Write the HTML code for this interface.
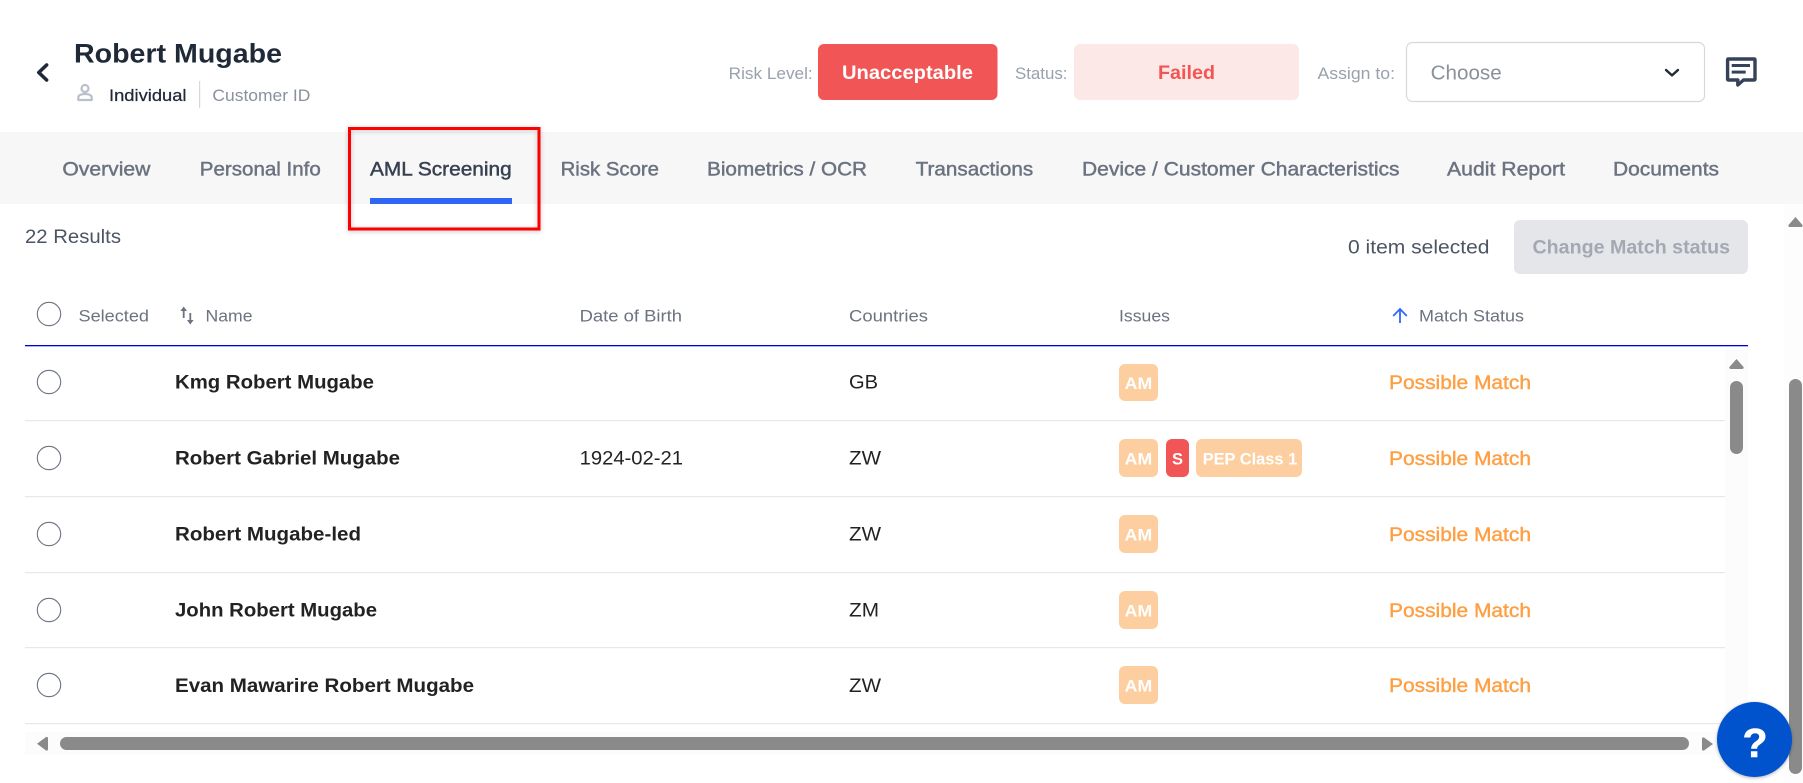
<!DOCTYPE html>
<html lang="en">
<head>
<meta charset="utf-8">
<title>AML Screening</title>
<style>
html,body{margin:0;padding:0;background:#fff;width:1803px;height:783px;overflow:hidden}
svg{display:block;position:absolute;left:0;top:0}
text{font-family:"Liberation Sans",sans-serif;white-space:pre}
.b{font-weight:700}
.tab{font-size:19.5px;fill:#6b7280;stroke:#6b7280;stroke-width:.45px}
.lab{font-size:16.5px;fill:#9aa1ac}
.th{font-size:16.5px;fill:#6b7280}
.nm{font-size:19.5px;font-weight:700;fill:#222}
.td{font-size:19px;fill:#222}
.pm{font-size:19.5px;fill:#ff9f43;stroke:#ff9f43;stroke-width:.4px}
.bt{font-size:16.5px;font-weight:700;fill:#fff}
.rc{fill:#fff;stroke:#6b7280;stroke-width:1.1}
.sep{fill:#e6e8ec}
</style>
</head>
<body>
<svg width="1803" height="783" viewBox="0 0 1803 783" xmlns="http://www.w3.org/2000/svg">
<defs>
<filter id="s1" x="-10%" y="-10%" width="120%" height="125%"><feDropShadow dx="0" dy="1" stdDeviation="2.5" flood-color="#000" flood-opacity=".25"/></filter>
<filter id="s2" x="-15%" y="-15%" width="130%" height="130%"><feDropShadow dx="0" dy="1" stdDeviation="1.5" flood-color="#000" flood-opacity=".3"/></filter>
</defs>
<rect width="1803" height="783" fill="#fff"/>

<!-- header -->
<path d="M46.6 65 L38.8 72.5 L46.6 80" fill="none" stroke="#1f2937" stroke-width="3.6" stroke-linecap="round" stroke-linejoin="round"/>
<text x="74" y="62.7" class="b" font-size="27" fill="#1f2937" textLength="208" lengthAdjust="spacingAndGlyphs">Robert Mugabe</text>
<circle cx="85" cy="88.5" r="3.5" fill="none" stroke="#b9c0cc" stroke-width="2.2"/>
<path d="M78.3 100 V97.5 C78.3 94.8 82 94 85 94 C88 94 91.7 94.8 91.7 97.5 V100 Z" fill="none" stroke="#b9c0cc" stroke-width="2.2" stroke-linejoin="round"/>
<text x="109" y="101" font-size="17" fill="#1f2937" stroke="#1f2937" stroke-width=".25" textLength="77.5" lengthAdjust="spacingAndGlyphs">Individual</text>
<rect x="199" y="81" width="1.2" height="27" fill="#d5d8de"/>
<text x="212.4" y="101" font-size="17" fill="#8a919b" textLength="98" lengthAdjust="spacingAndGlyphs">Customer ID</text>

<text x="728.7" y="79" class="lab" textLength="84" lengthAdjust="spacingAndGlyphs">Risk Level:</text>
<rect x="818" y="44" width="179.5" height="56" rx="6" fill="#f25555"/>
<text x="842" y="79" class="b" font-size="19.5" fill="#fff" textLength="131" lengthAdjust="spacingAndGlyphs">Unacceptable</text>
<text x="1015" y="79" class="lab" textLength="52.5" lengthAdjust="spacingAndGlyphs">Status:</text>
<rect x="1074" y="44" width="225" height="56" rx="6" fill="#fce8e6"/>
<text x="1158" y="79" class="b" font-size="19.5" fill="#f25555" textLength="57" lengthAdjust="spacingAndGlyphs">Failed</text>
<text x="1317.5" y="79" class="lab" textLength="77.5" lengthAdjust="spacingAndGlyphs">Assign to:</text>
<rect x="1406.5" y="42.5" width="298" height="59" rx="6" fill="#fff" stroke="#d5d8de" stroke-width="1.2"/>
<text x="1430.7" y="79.5" font-size="20.5" fill="#8a919b" textLength="71" lengthAdjust="spacingAndGlyphs">Choose</text>
<path d="M1666 70 L1672 75.4 L1678 70" fill="none" stroke="#1f2937" stroke-width="2.4" stroke-linecap="round" stroke-linejoin="round"/>
<path d="M1728.5 59 H1754 Q1755 59 1755 60 V79 Q1755 80 1754 80 H1743.5 L1737.8 85 V80 H1728.5 Q1727.6 80 1727.6 79 V60 Q1727.6 59 1728.5 59 Z" fill="none" stroke="#374259" stroke-width="3.4" stroke-linejoin="round"/>
<rect x="1731.7" y="64" width="18.3" height="3" fill="#374259"/>
<rect x="1731.7" y="70.6" width="14" height="3" fill="#374259"/>

<!-- tabs -->
<rect x="0" y="132" width="1803" height="72" fill="#f7f7f7"/>
<text x="62.4" y="175.5" class="tab" textLength="88" lengthAdjust="spacingAndGlyphs">Overview</text>
<text x="199.8" y="175.5" class="tab" textLength="121" lengthAdjust="spacingAndGlyphs">Personal Info</text>
<text x="370" y="175.5" class="tab" style="fill:#374151;stroke:#374151" textLength="141.7" lengthAdjust="spacingAndGlyphs">AML Screening</text>
<rect x="370" y="198" width="142" height="6" fill="#2f66f6"/>
<text x="560.6" y="175.5" class="tab" textLength="98.4" lengthAdjust="spacingAndGlyphs">Risk Score</text>
<text x="707" y="175.5" class="tab" textLength="160" lengthAdjust="spacingAndGlyphs">Biometrics / OCR</text>
<text x="915.7" y="175.5" class="tab" textLength="117.5" lengthAdjust="spacingAndGlyphs">Transactions</text>
<text x="1082" y="175.5" class="tab" textLength="317.5" lengthAdjust="spacingAndGlyphs">Device / Customer Characteristics</text>
<text x="1447" y="175.5" class="tab" textLength="118" lengthAdjust="spacingAndGlyphs">Audit Report</text>
<text x="1613" y="175.5" class="tab" textLength="106" lengthAdjust="spacingAndGlyphs">Documents</text>
<rect x="349.5" y="128.5" width="189.5" height="100.5" fill="none" stroke="#f00" stroke-width="3" filter="url(#s1)"/>

<!-- toolbar -->
<text x="25" y="243" font-size="19" fill="#4b5563" textLength="96" lengthAdjust="spacingAndGlyphs">22 Results</text>
<text x="1348" y="253.5" font-size="19" fill="#4b5563" textLength="141.5" lengthAdjust="spacingAndGlyphs">0 item selected</text>
<rect x="1514" y="220" width="234" height="54" rx="6" fill="#e4e6ea"/>
<text x="1532.5" y="253.5" class="b" font-size="19" fill="#a3a8b2" textLength="197.5" lengthAdjust="spacingAndGlyphs">Change Match status</text>

<!-- scrollbars -->
<rect x="1784" y="204" width="19" height="579" fill="#fdfdfd"/>
<path d="M1795.5 217 L1802.5 225 Q1803 227 1801 227 H1790 Q1788 227 1788.5 225 Z" fill="#8a8a8a"/>
<rect x="1789" y="379" width="13" height="395" rx="6.5" fill="#8a8a8a"/>

<rect x="1725" y="348" width="23" height="376" fill="#fcfcfc"/>
<path d="M1736.5 359 L1743.6 367 Q1744 369 1742 369 H1731 Q1729 369 1729.4 367 Z" fill="#8a8a8a"/>
<rect x="1730" y="381" width="13" height="73" rx="6.5" fill="#8a8a8a"/>

<rect x="25" y="732" width="1700" height="23" fill="#fcfcfc"/>
<path d="M37 743.7 L46 737 Q48 736.5 48 738.5 V749 Q48 751 46 750.5 Z" fill="#8a8a8a"/>
<rect x="60" y="737" width="1629" height="13" rx="6.5" fill="#8a8a8a"/>
<path d="M1713 744 L1704 737.5 Q1702 737 1702 739 V749 Q1702 751 1704 750.5 Z" fill="#8a8a8a"/>

<!-- table head -->
<circle cx="49" cy="314" r="11.7" class="rc"/>
<text x="78.5" y="321.5" class="th" textLength="70.5" lengthAdjust="spacingAndGlyphs">Selected</text>
<path d="M183.7 318 V310" fill="none" stroke="#6b7280" stroke-width="1.8"/>
<path d="M183.7 306.5 L187 311 H180.4 Z" fill="#6b7280"/>
<path d="M190.3 313 V321" fill="none" stroke="#6b7280" stroke-width="1.8"/>
<path d="M190.3 324.5 L187 320 H193.6 Z" fill="#6b7280"/>
<text x="205.5" y="321.5" class="th" textLength="47" lengthAdjust="spacingAndGlyphs">Name</text>
<text x="579.6" y="321.5" class="th" textLength="102.4" lengthAdjust="spacingAndGlyphs">Date of Birth</text>
<text x="849" y="321.5" class="th" textLength="79" lengthAdjust="spacingAndGlyphs">Countries</text>
<text x="1119" y="321.5" class="th" textLength="51" lengthAdjust="spacingAndGlyphs">Issues</text>
<path d="M1400 323 V309.5 M1393.2 316 L1400 309 L1406.8 316" fill="none" stroke="#2f66f6" stroke-width="1.8"/>
<text x="1419" y="321.5" class="th" textLength="105" lengthAdjust="spacingAndGlyphs">Match Status</text>
<rect x="25" y="345" width="1723" height="1.3" fill="#0000d0"/>

<!-- row 1 -->
<circle cx="49" cy="382" r="11.7" class="rc"/>
<text x="175" y="388.7" class="nm" textLength="199" lengthAdjust="spacingAndGlyphs">Kmg Robert Mugabe</text>
<text x="849" y="388.7" class="td" textLength="29" lengthAdjust="spacingAndGlyphs">GB</text>
<rect x="1119" y="364" width="39" height="37" rx="6" fill="#fdcfa0"/>
<text x="1124.7" y="389" class="bt" textLength="27.5" lengthAdjust="spacingAndGlyphs">AM</text>
<text x="1389" y="389" class="pm" textLength="142" lengthAdjust="spacingAndGlyphs">Possible Match</text>
<rect x="25" y="420" width="1700" height="1.2" class="sep"/>

<!-- row 2 -->
<circle cx="49" cy="458" r="11.7" class="rc"/>
<text x="175" y="464.7" class="nm" textLength="225" lengthAdjust="spacingAndGlyphs">Robert Gabriel Mugabe</text>
<text x="579.6" y="464.7" class="td" textLength="103.4" lengthAdjust="spacingAndGlyphs">1924-02-21</text>
<text x="849" y="464.7" class="td" textLength="32" lengthAdjust="spacingAndGlyphs">ZW</text>
<rect x="1119" y="439" width="39" height="38" rx="6" fill="#fdcfa0"/>
<text x="1124.7" y="464.5" class="bt" textLength="27.5" lengthAdjust="spacingAndGlyphs">AM</text>
<rect x="1166" y="439" width="23" height="38" rx="6" fill="#f25555"/>
<text x="1172" y="464.5" class="bt" textLength="11" lengthAdjust="spacingAndGlyphs">S</text>
<rect x="1196" y="439" width="106" height="38" rx="6" fill="#fdcfa0"/>
<text x="1202.7" y="464.5" class="bt" textLength="94.5" lengthAdjust="spacingAndGlyphs">PEP Class 1</text>
<text x="1389" y="465" class="pm" textLength="142" lengthAdjust="spacingAndGlyphs">Possible Match</text>
<rect x="25" y="496" width="1700" height="1.2" class="sep"/>

<!-- row 3 -->
<circle cx="49" cy="534" r="11.7" class="rc"/>
<text x="175" y="540.7" class="nm" textLength="186" lengthAdjust="spacingAndGlyphs">Robert Mugabe-led</text>
<text x="849" y="540.7" class="td" textLength="32" lengthAdjust="spacingAndGlyphs">ZW</text>
<rect x="1119" y="515" width="39" height="38" rx="6" fill="#fdcfa0"/>
<text x="1124.7" y="540.5" class="bt" textLength="27.5" lengthAdjust="spacingAndGlyphs">AM</text>
<text x="1389" y="541" class="pm" textLength="142" lengthAdjust="spacingAndGlyphs">Possible Match</text>
<rect x="25" y="572" width="1700" height="1.2" class="sep"/>

<!-- row 4 -->
<circle cx="49" cy="610" r="11.7" class="rc"/>
<text x="175" y="616.5" class="nm" textLength="202" lengthAdjust="spacingAndGlyphs">John Robert Mugabe</text>
<text x="849" y="616.5" class="td" textLength="30" lengthAdjust="spacingAndGlyphs">ZM</text>
<rect x="1119" y="591" width="39" height="38" rx="6" fill="#fdcfa0"/>
<text x="1124.7" y="616.5" class="bt" textLength="27.5" lengthAdjust="spacingAndGlyphs">AM</text>
<text x="1389" y="617" class="pm" textLength="142" lengthAdjust="spacingAndGlyphs">Possible Match</text>
<rect x="25" y="647" width="1700" height="1.2" class="sep"/>

<!-- row 5 -->
<circle cx="49" cy="685" r="11.7" class="rc"/>
<text x="175" y="692" class="nm" textLength="299" lengthAdjust="spacingAndGlyphs">Evan Mawarire Robert Mugabe</text>
<text x="849" y="692" class="td" textLength="32" lengthAdjust="spacingAndGlyphs">ZW</text>
<rect x="1119" y="666" width="39" height="38" rx="6" fill="#fdcfa0"/>
<text x="1124.7" y="691.5" class="bt" textLength="27.5" lengthAdjust="spacingAndGlyphs">AM</text>
<text x="1389" y="692" class="pm" textLength="142" lengthAdjust="spacingAndGlyphs">Possible Match</text>
<rect x="25" y="723" width="1700" height="1.2" class="sep"/>

<!-- help -->
<circle cx="1754.5" cy="739.5" r="37.5" fill="#0052cc" filter="url(#s2)"/>
<text x="1755" y="757" text-anchor="middle" class="b" font-size="41" fill="#fff" stroke="#fff" stroke-width=".6">?</text>
</svg>
</body>
</html>
